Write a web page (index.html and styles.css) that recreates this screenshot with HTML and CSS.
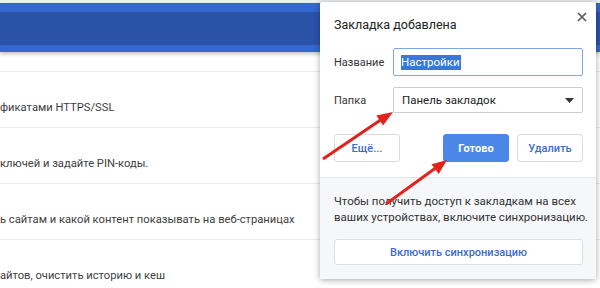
FILE: index.html
```html
<!DOCTYPE html>
<html lang="ru">
<head>
    <meta charset="UTF-8">
    <link rel="stylesheet" href="styles.css">
    <title>Закладка добавлена</title>
</head>
<body>
    <!-- Settings toolbar -->
    <div class="topline"></div>
    <div class="toolbar"></div>

    <!-- Settings rows behind the bubble -->
    <div class="rows">
        <div class="row row-tail"></div>
        <div class="row"><p>фикатами HTTPS/SSL</p></div>
        <div class="row"><p>ключей и задайте PIN-коды.</p></div>
        <div class="row"><p>ь сайтам и какой контент показывать на веб-страницах</p></div>
        <div class="row"><p>айтов, очистить историю и кеш</p></div>
    </div>

    <!-- Bookmark bubble -->
    <div class="bubble">
        <div class="bubble-main">
            <div class="bubble-head">
                <h1>Закладка добавлена</h1>
                <svg class="close" width="10" height="10" viewBox="0 0 10 10">
                    <path d="M1 1L9 9M9 1L1 9" stroke="#5a5a5a" stroke-width="1.7" fill="none"/>
                </svg>
            </div>
            <div class="form">
                <label for="bm-name">Название</label>
                <div class="field focused" id="bm-name"><span class="sel">Настройки</span></div>
                <label for="bm-folder">Папка</label>
                <div class="field select" id="bm-folder">
                    <span>Панель закладок</span>
                    <svg width="9" height="5" viewBox="0 0 9 5"><path d="M0 0H9L4.5 5Z" fill="#333"/></svg>
                </div>
            </div>
            <div class="actions">
                <button class="btn">Ещё...</button>
                <div class="actions-right">
                    <button class="btn primary">Готово</button>
                    <button class="btn">Удалить</button>
                </div>
            </div>
        </div>
        <div class="bubble-foot">
            <p>Чтобы получить доступ к закладкам на всех ваших устройствах, включите синхронизацию.</p>
            <button class="btn sync">Включить синхронизацию</button>
        </div>
    </div>

    <!-- Red annotation arrows -->
    <svg class="arrows" width="600" height="288" viewBox="0 0 600 288">
        <line x1="323" y1="159" x2="382" y2="119" stroke="#e2231c" stroke-width="3"/>
        <polygon points="393,112 383.1,125.4 376.3,115.6" fill="#e2231c"/>
        <line x1="386" y1="204" x2="437" y2="167" stroke="#e2231c" stroke-width="3"/>
        <polygon points="447,160 438.7,173.9 431.5,164.3" fill="#e2231c"/>
    </svg>
</body>
</html>
```

FILE: styles.css
```css
/* Page */
body {
    margin: 0;
    width: 600px;
    height: 288px;
    overflow: hidden;
    position: relative;
    background-color: #ffffff;
    font-family: Roboto, "Noto Sans", sans-serif;
}

/* Toolbar */
.topline {
    height: 3px;
    background-color: #eef0f5;
}

.toolbar {
    height: 33px;
    background-color: #2a53a8;
    border-top: 9px solid #3567d0;
    border-bottom: 7px solid #3567d0;
    box-shadow: 0 2px 4px rgba(0, 0, 0, 0.25);
}

/* Settings rows */
.row {
    height: 56px;
    border-bottom: 1px solid #ebebeb;
    padding-top: 28px;
    box-sizing: border-box;
}

.row-tail {
    height: 20px;
    padding: 0;
}

.row p {
    margin: 0;
    font-size: 11.2px;
    line-height: 16px;
    color: #404040;
    white-space: nowrap;
}

/* Bubble */
.bubble {
    position: absolute;
    left: 320px;
    top: 2px;
    width: 276px;
    background-color: #ffffff;
    border-radius: 2px;
    box-shadow: 0 1px 6px rgba(0, 0, 0, 0.35);
    font-family: Roboto, "Noto Sans", sans-serif;
    overflow: hidden;
}

.bubble-main {
    padding: 13px 13px 15px 14px;
    border-bottom: 1px solid #e6e6e6;
}

.bubble-head {
    display: flex;
    justify-content: space-between;
    align-items: flex-start;
}

.bubble-head h1 {
    margin: 0;
    font-size: 12.5px;
    font-weight: normal;
    line-height: 20px;
    color: #222222;
}

.close {
    margin-top: -3px;
    margin-right: -4px;
}

/* Form */
.form {
    display: grid;
    grid-template-columns: 59px 190px;
    row-gap: 11px;
    align-items: center;
    margin-top: 13px;
}

.form label {
    font-size: 11px;
    color: #333333;
}

.field {
    height: 26px;
    box-sizing: border-box;
    border: 1px solid #cccccc;
    border-radius: 2px;
    display: flex;
    align-items: center;
    padding: 0 8px;
    font-size: 11.5px;
    color: #222222;
}

.field.focused {
    height: 28px;
    border-color: #7ea6e2;
    padding-left: 7px;
}

.sel {
    background-color: #3a78d8;
    color: #ffffff;
    line-height: 15px;
    padding-right: 1px;
}

.select {
    justify-content: space-between;
}

/* Buttons */
.actions {
    display: flex;
    justify-content: space-between;
    margin-top: 21px;
}

.actions-right {
    display: flex;
    gap: 8px;
}

.btn {
    width: 66px;
    height: 28px;
    border: 1px solid #dcdcdc;
    border-radius: 3px;
    background-color: #ffffff;
    color: #3a6ccc;
    font-family: Roboto, "Noto Sans", sans-serif;
    font-size: 11px;
    font-weight: 500;
    padding: 0;
}

.btn.primary {
    background-color: #4a87e6;
    border-color: #4a87e6;
    color: #ffffff;
    font-weight: bold;
}

/* Footer */
.bubble-foot {
    background-color: #f6f7f9;
    padding: 15px 13px 14px 14px;
}

.bubble-foot p {
    margin: 0 -8px 14px 0;
    font-size: 11.5px;
    line-height: 16px;
    color: #333333;
}

.btn.sync {
    width: 100%;
    height: 26px;
    border-color: #e0e0e0;
}

/* Annotation overlay */
.arrows {
    position: absolute;
    left: 0;
    top: 0;
    pointer-events: none;
}
```
